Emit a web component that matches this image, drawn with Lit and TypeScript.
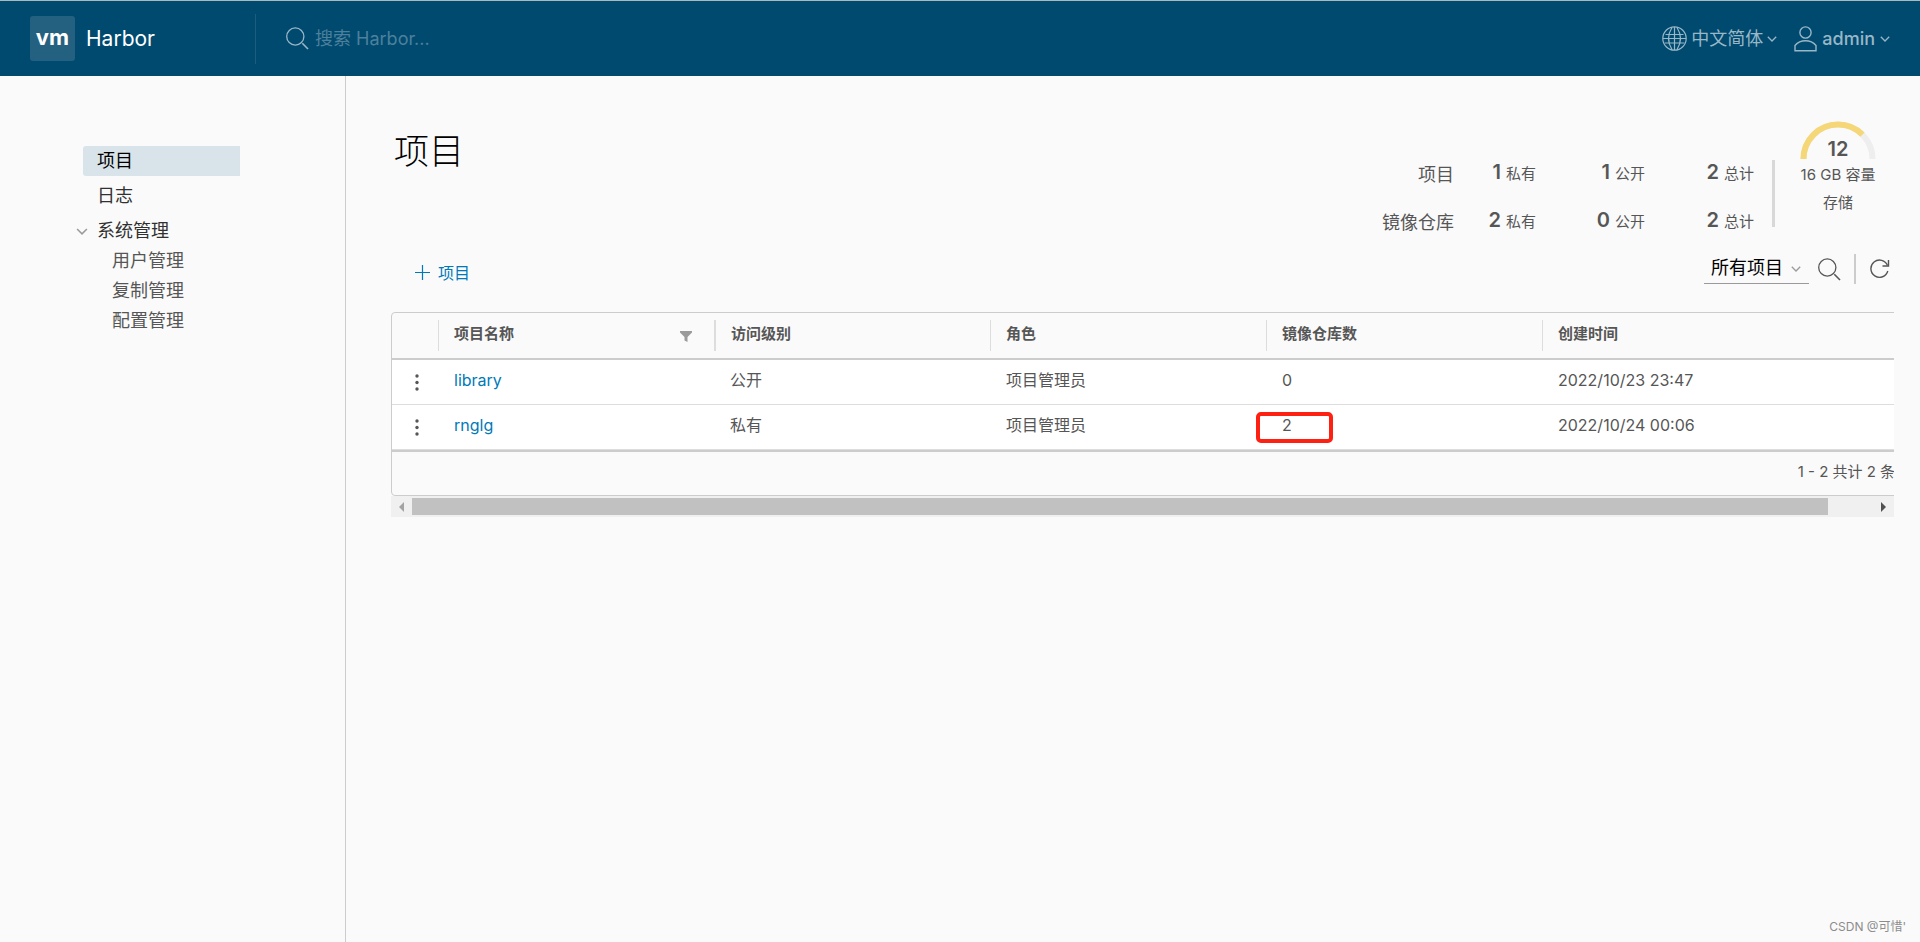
import { LitElement, html, css, svg } from "lit";
import { customElement, property } from "lit/decorators.js";
import { classMap } from "lit/directives/class-map.js";

interface Project {
  name: string;
  access: string;
  role: string;
  repos: number;
  created: string;
  marked?: boolean;
}

const projects: Project[] = [
  { name: "library", access: "公开", role: "项目管理员", repos: 0, created: "2022/10/23 23:47" },
  { name: "rnglg", access: "私有", role: "项目管理员", repos: 2, created: "2022/10/24 00:06", marked: true },
];

const statistics = [
  { label: "项目", values: [[1, "私有"], [1, "公开"], [2, "总计"]] },
  { label: "镜像仓库", values: [[2, "私有"], [0, "公开"], [2, "总计"]] },
];

const caret = svg`<svg class="caret" width="10" height="6" viewBox="0 0 10 6" aria-hidden="true">
  <path d="M0.8 0.8 L5 5 L9.2 0.8" fill="none" stroke="currentColor" stroke-width="1.3"/></svg>`;

const magnifier = svg`<svg width="23" height="23" viewBox="0 0 23 23" aria-hidden="true">
  <circle cx="9.3" cy="9.5" r="8.6" fill="none" stroke="currentColor" stroke-width="1.3"/>
  <path d="M16.3 16.2 L22 22" fill="none" stroke="currentColor" stroke-width="1.6"/></svg>`;

const base = css`
  * { box-sizing: border-box; }
  button, input, select { font: inherit; color: inherit; background: none; border: 0; padding: 0; margin: 0; }
  button { cursor: pointer; }
  a { text-decoration: none; color: inherit; }
  svg { display: block; flex: none; }
`;

@customElement("harbor-header")
export class HarborHeader extends LitElement {
  static styles = [base, css`
    :host { display: block; }
    .bar { display: flex; align-items: center; height: 76px; background: #004a70; border-top: 1px solid #a9b9c0; color: #99b7c6; font-size: 18px; line-height: 24px; padding: 0 30px; }
    .brand { display: flex; align-items: center; gap: 11px; width: 225px; color: #fff; font-size: 21px; }
    .logo { width: 45px; height: 45px; border-radius: 3px; background: #246080; display: flex; align-items: center; justify-content: center; font-size: 22px; font-weight: 700; line-height: 40px; padding-bottom: 3px; }
    .search { flex: 1; display: flex; align-items: center; gap: 6px; height: 50px; padding-left: 30px; border-left: 1px solid #1c5d7f; }
    .search input { flex: 1; outline: 0; }
    .search input::placeholder { color: #4d809b; opacity: 1; }
    .menus { display: flex; align-items: center; gap: 17px; }
    .menu { display: flex; align-items: center; gap: 5px; }
    .user { font-weight: 500; }
    .user, .menu { letter-spacing: normal; }
    .lang { gap: 4px; }
  `];

  render() {
    return html`
      <header class="bar">
        <a class="brand" href="#"><span class="logo">vm</span><span>Harbor</span></a>
        <label class="search">${magnifier}<input type="search" aria-label="搜索 Harbor" placeholder="搜索 Harbor..." /></label>
        <div class="menus">
          <button class="menu lang">
            <svg width="25" height="25" viewBox="0 0 25 25" aria-hidden="true" fill="none" stroke="currentColor" stroke-width="1.2">
              <circle cx="12.5" cy="12.5" r="11.7"/>
              <path d="M12.5 1 V24 M3.500 8.500 H21.500 M2.500 17 H22.500 M1 12.500 H24 M10 1.500 Q3 12.500 10 23.500 M15 1.500 Q22 12.500 15 23.500"/>
            </svg>
            <span>中文简体</span>${caret}
          </button>
          <button class="menu user">
            <svg width="23" height="26" viewBox="0 0 23 26" aria-hidden="true" fill="none" stroke="currentColor" stroke-width="1.4">
              <circle cx="11.5" cy="6.5" r="5.6"/>
              <path d="M1 24.8 V19.5 Q5 14.8 11.5 14.8 Q18 14.8 22 19.5 V24.8 Z"/>
            </svg>
            <span>admin</span>${caret}
          </button>
        </div>
      </header>`;
  }
}

@customElement("harbor-nav")
export class HarborNav extends LitElement {
  static styles = [base, css`
    :host { display: block; flex: none; width: 346px; border-right: 1px solid #ccc; padding: 70px 105px 0 75px; font-size: 18px; line-height: 30px; color: #313131; }
    .list { display: flex; flex-direction: column; gap: 5px; padding-left: 8px; }
    .item { display: block; padding-left: 14px; height: 30px; }
    .active { background: #d9e4ea; color: #000; border-radius: 3px 0 0 3px; }
    .group { display: flex; align-items: center; gap: 9px; height: 30px; margin-top: 5px; padding-left: 1px; }
    .group .caret { color: #9a9a9a; width: 12px; height: 7px; }
    .children { display: flex; flex-direction: column; padding-left: 37px; color: #565656; }
  `];

  render() {
    return html`
      <nav>
        <div class="list">
          <a class="item active" href="#projects" aria-current="page">项目</a>
          <a class="item" href="#logs">日志</a>
        </div>
        <button class="group" aria-expanded="true">${caret}<span>系统管理</span></button>
        <div class="children">
          <a href="#users">用户管理</a>
          <a href="#replication">复制管理</a>
          <a href="#config">配置管理</a>
        </div>
      </nav>`;
  }
}

@customElement("harbor-statistics")
export class HarborStatistics extends LitElement {
  @property({ type: Number }) used = 12;
  @property({ type: Number }) total = 16;

  static styles = [base, css`
    :host { display: flex; color: #565656; font-size: 15px; line-height: 20px; padding-right: 17px; }
    .counts { display: grid; grid-template-columns: 72px 82px 109px 109px; align-content: start; row-gap: 16px; padding: 38px 18px 0 0; }
    .label { font-size: 18px; line-height: 32px; text-align: right; }
    .count { display: flex; justify-content: flex-end; align-items: baseline; gap: 5px; line-height: 26px; }
    .count b { font-size: 20px; font-weight: 600; }
    .storage { display: flex; gap: 24px; }
    .rule { width: 3px; height: 67px; margin-top: 39px; background: #d8d8d8; }
    .gauge { display: flex; flex-direction: column; align-items: center; width: 78px; text-align: center; gap: 8px; }
    .dial { display: grid; justify-items: center; }
    .dial > * { grid-area: 1 / 1; }
    .dial b { align-self: end; font-size: 20px; font-weight: 600; }
    .caption { white-space: nowrap; }
    .top { display: flex; flex-direction: column; gap: 6px; align-items: center; }
  `];

  render() {
    const filled = (this.used / this.total) * 100;
    return html`
      <div class="counts">
        ${statistics.map((row) => html`
          <span class="label">${row.label}</span>
          ${row.values.map(([n, unit]) => html`<span class="count"><b>${n}</b><span>${unit}</span></span>`)}
        `)}
      </div>
      <div class="storage">
        <span class="rule"></span>
        <div class="gauge">
          <div class="top">
            <div class="dial">
              <svg width="76" height="38" viewBox="0 0 76 38" aria-hidden="true" fill="none" stroke-width="6">
                <path d="M3.5 38 A34.5 34.5 0 0 1 72.5 38" stroke="#eee"/>
                <path d="M3.5 38 A34.5 34.5 0 0 1 72.5 38" stroke="#f5d777" pathLength="100" stroke-dasharray="${filled} 100"/>
              </svg>
              <b>${this.used}</b>
            </div>
            <span class="caption">${this.total} GB 容量</span>
          </div>
          <span>存储</span>
        </div>
      </div>`;
  }
}

@customElement("harbor-projects")
export class HarborProjects extends LitElement {
  static styles = [base, css`
    :host { display: block; font-size: 16px; line-height: 24px; color: #565656; }
    .viewport { overflow: hidden; }
    .frame { width: 103.2%; border: 1px solid #ccc; border-radius: 4px; }
    .grid { width: 100%; table-layout: fixed; border-collapse: separate; border-spacing: 0; }
    .menu-col { width: 46px; }
    .data-col { width: 276px; }
    th, td { text-align: left; padding: 0 0 0 16px; }
    th { height: 47px; font-size: 15px; font-weight: 600; padding: 7px 0; border-bottom: 2px solid #ccc; }
    .head { display: flex; justify-content: space-between; align-items: center; height: 31px; padding: 0 22px 4px 15px; border-left: 1px solid #ddd; }
    .head svg { margin-top: 6px; }
    .wide { border-left-width: 2px; }
    td { height: 45px; background: #fff; border-bottom: 1px solid #ddd; padding-bottom: 4px; }
    .link { color: #0079b8; }
    .dots { display: block; margin-left: 16px; width: 10px; }
    .dots svg { margin: 0 auto; }
    .action { padding: 0 0 0 4px; }
    .mark { position: relative; }
    .ring::after { content: ""; box-sizing: border-box; position: absolute; left: -10px; top: 7px; width: 77px; height: 31px; border: 4px solid #fe2010; border-radius: 5px; }
    .foot { display: flex; justify-content: flex-end; height: 45px; border-top: 2px solid #ccc; font-size: 15px; line-height: 40px; padding-right: 46px; }
    .scroll { display: flex; align-items: center; height: 21px; background: #f0f0f0; color: #505050; }
    .scroll button { width: 21px; height: 21px; display: grid; place-items: center; }
    .scroll .off { color: #a3a3a3; }
    .track { flex: 1; }
    .thumb { height: 17px; background: #c1c1c1; width: 96.9%; }
  `];

  render() {
    return html`
      <div class="viewport">
        <div class="frame">
          <table class="grid">
            <colgroup><col class="menu-col" /><col class="data-col" /><col class="data-col" /><col class="data-col" /><col class="data-col" /><col /></colgroup>
            <thead>
              <tr>
                <th></th>
                <th><div class="head">项目名称
                  <button aria-label="筛选">
                    <svg width="12" height="11" viewBox="0 0 12 11" aria-hidden="true"><path d="M0 0 H12 V1.5 L7.5 6 V11 L4.5 9.5 V6 L0 1.5 Z" fill="#9a9a9a"/></svg>
                  </button></div></th>
                <th><div class="head wide">访问级别</div></th>
                <th><div class="head">角色</div></th>
                <th><div class="head">镜像仓库数</div></th>
                <th><div class="head">创建时间</div></th>
              </tr>
            </thead>
            <tbody>
              ${projects.map((p) => html`
                <tr>
                  <td class="action"><button class="dots" aria-label="操作">
                    <svg width="4" height="17" viewBox="0 0 4 17" fill="#565656" aria-hidden="true"><circle cx="2" cy="2" r="1.7"/><circle cx="2" cy="8.5" r="1.7"/><circle cx="2" cy="15" r="1.7"/></svg>
                  </button></td>
                  <td><a class="link" href="#${p.name}">${p.name}</a></td>
                  <td>${p.access}</td>
                  <td>${p.role}</td>
                  <td class=${classMap({ mark: true, ring: !!p.marked })}>${p.repos}</td>
                  <td>${p.created}</td>
                </tr>`)}
            </tbody>
          </table>
          <div class="foot">1 - 2 共计 2 条</div>
        </div>
      </div>
      <div class="scroll">
        <button class="off" aria-label="向左滚动"><svg width="5" height="10" viewBox="0 0 5 10"><path d="M5 0 V10 L0 5 Z" fill="currentColor"/></svg></button>
        <div class="track"><div class="thumb"></div></div>
        <button aria-label="向右滚动"><svg width="5" height="10" viewBox="0 0 5 10"><path d="M0 0 V10 L5 5 Z" fill="currentColor"/></svg></button>
      </div>`;
  }
}

@customElement("app-root")
export class AppRoot extends LitElement {
  static styles = [base, css`
    :host { display: flex; flex-direction: column; min-height: 100vh; position: relative; background: #fafafa; font-family: Inter, "Noto Sans CJK SC", sans-serif; color: #565656; }
    .body { flex: 1; display: flex; }
    .main { flex: 1; min-width: 0; padding: 45px 26px 0 45px; }
    .top { display: flex; justify-content: space-between; height: 115px; }
    .title { margin: 6px 0 0 3px; font-size: 35px; line-height: 48px; font-weight: 300; color: #000; }
    .tools { display: flex; justify-content: space-between; align-items: center; height: 36px; margin: 15px 0 25px; }
    .create { display: flex; align-items: center; gap: 8px; padding: 6px 24px 0; font-size: 16px; color: #0079b8; }
    .filters { display: flex; align-items: center; padding-right: 4px; }
    .pick { position: relative; display: flex; color: #000; }
    .pick select { appearance: none; width: 105px; height: 30px; padding: 0 24px 3px 7px; border-bottom: 1px solid #9a9a9a; font-size: 18px; outline: 0; }
    .pick .caret { position: absolute; right: 8px; top: 12px; color: #9a9a9a; pointer-events: none; }
    .find { margin: 0 13px 0 9px; }
    .rule { width: 2px; height: 30px; background: #ccc; margin-right: 14px; }
    .watermark { position: absolute; right: 14px; bottom: 6px; font-size: 12px; line-height: 18px; color: #8c8c8c; }
  `];

  render() {
    return html`
      <harbor-header></harbor-header>
      <div class="body">
        <harbor-nav></harbor-nav>
        <main class="main">
          <div class="top">
            <h1 class="title">项目</h1>
            <harbor-statistics></harbor-statistics>
          </div>
          <div class="tools">
            <button class="create">
              <svg width="15" height="15" viewBox="0 0 15 15" aria-hidden="true"><path d="M7.5 0 V15 M0 7.5 H15" stroke="currentColor" stroke-width="1.2"/></svg>
              <span>项目</span>
            </button>
            <div class="filters">
              <label class="pick"><select aria-label="项目筛选"><option>所有项目</option><option>私有项目</option><option>公开项目</option></select>${caret}</label>
              <button class="find" aria-label="搜索">${magnifier}</button>
              <span class="rule"></span>
              <button aria-label="刷新">
                <svg width="20" height="20" viewBox="0 0 20 20" aria-hidden="true" fill="none" stroke="currentColor" stroke-width="1.4">
                  <path d="M17.8 12 A8.6 8.6 0 1 1 17.5 6.5"/>
                  <path d="M12.5 7 H18.5 V1"/>
                </svg>
              </button>
            </div>
          </div>
          <harbor-projects></harbor-projects>
        </main>
      </div>
      <div class="watermark">CSDN @可惜'</div>`;
  }
}
